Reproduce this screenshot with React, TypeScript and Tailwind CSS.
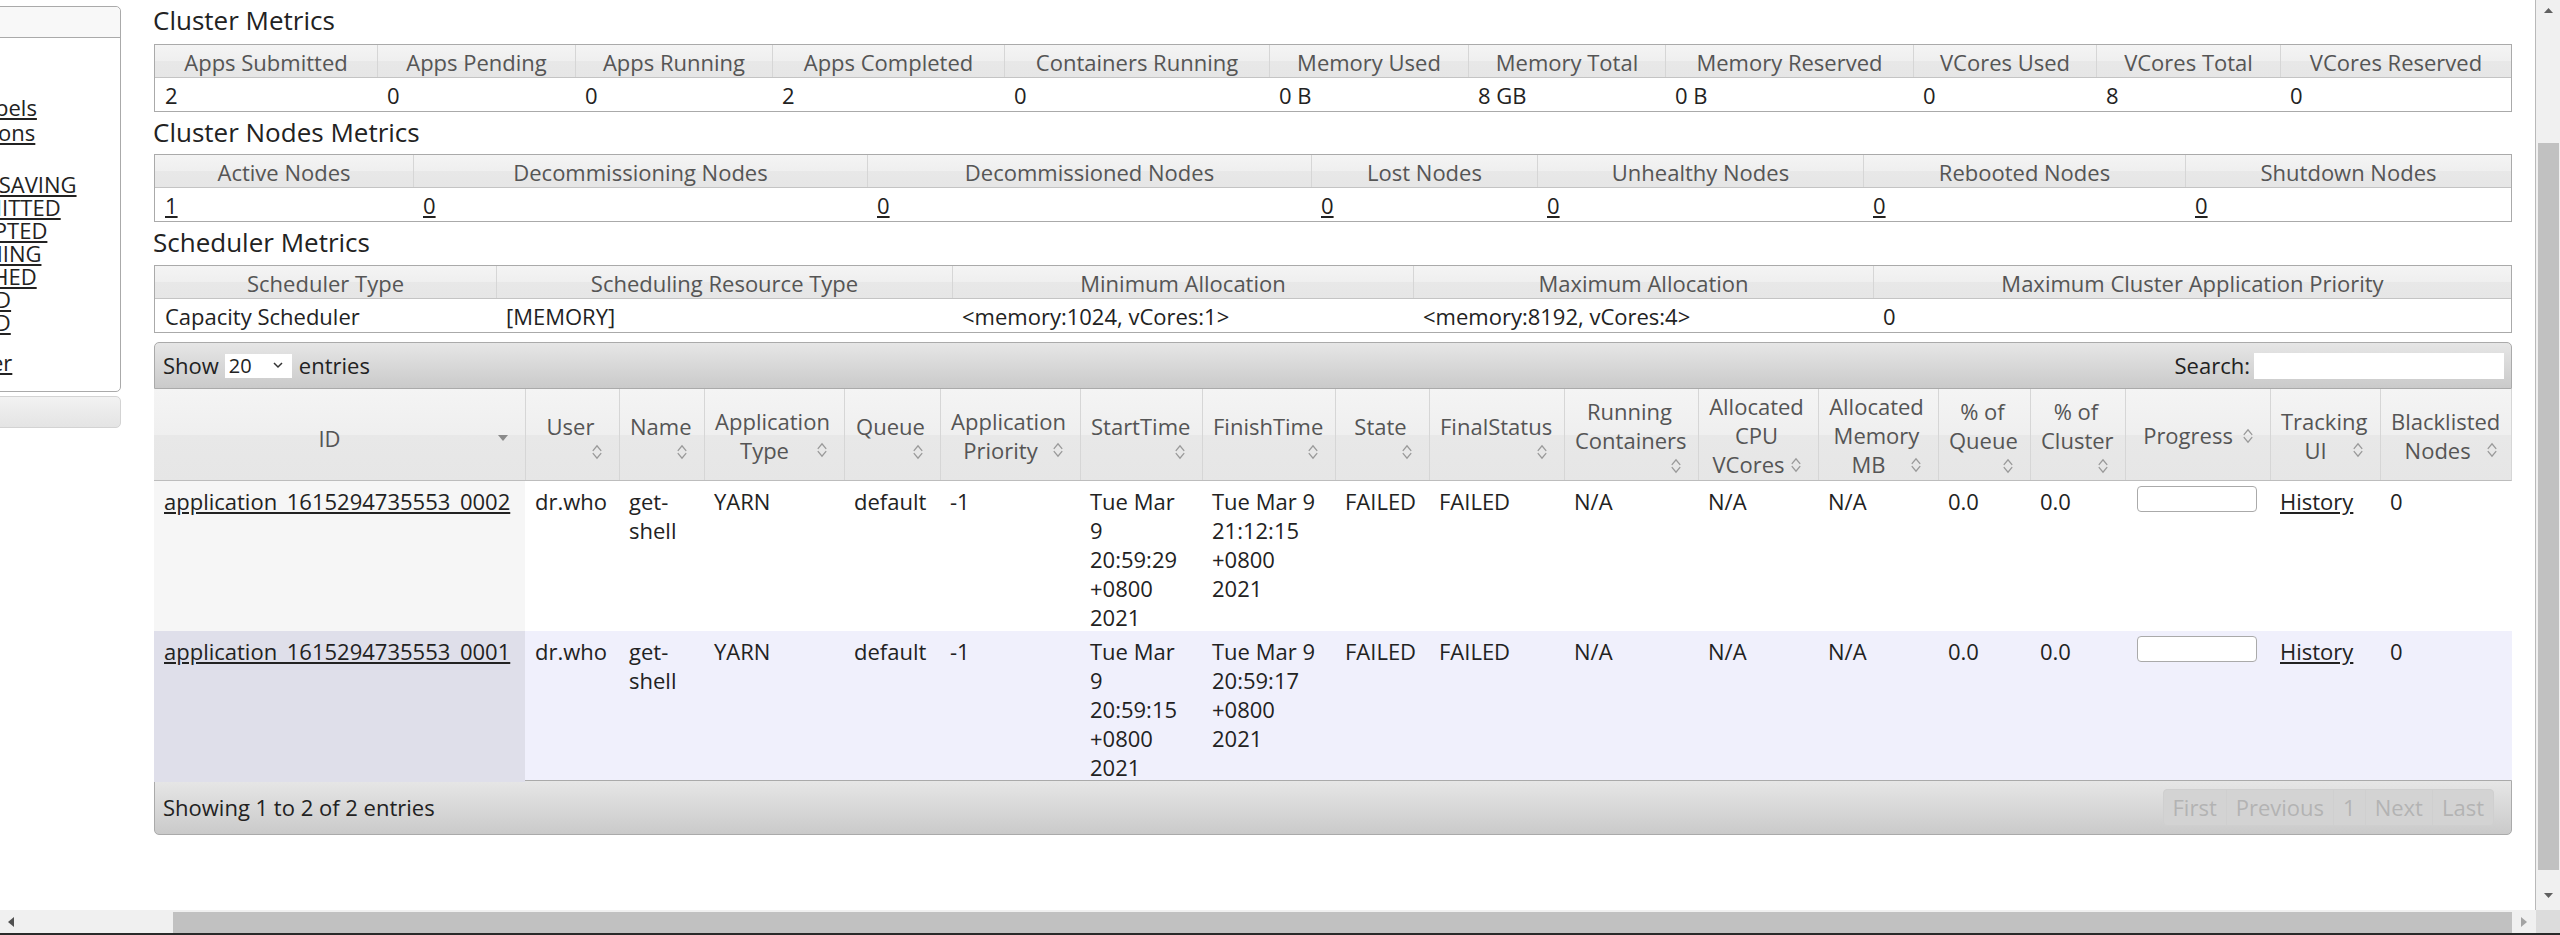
import React from "react";

const HDR =
  "bg-[linear-gradient(to_bottom,#f4f4f4_0%,#efefef_50%,#e8e8e8_50%,#e6e6e6_100%)]";
const BAR =
  "bg-[linear-gradient(to_bottom,#e6e6e6_0%,#d8d8d8_50%,#cacaca_100%)]";

function SortBoth() {
  return (
    <svg width="16" height="16" viewBox="0 0 16 16" className="shrink-0">
      <path d="M3.8 6.8L8 1.8L12.2 6.8" fill="none" stroke="#999" strokeWidth="1.3" />
      <path d="M3.8 9.2L8 14.2L12.2 9.2" fill="none" stroke="#999" strokeWidth="1.3" />
    </svg>
  );
}

function SortDesc() {
  return (
    <svg width="16" height="16" viewBox="0 0 16 16" className="shrink-0">
      <path d="M3 5H13L8 11Z" fill="#8a8a8a" />
    </svg>
  );
}

function Sidebar() {
  const main = ["About", "Nodes", "Node Labels", "Applications"];
  const states = [
    "NEW",
    "NEW_SAVING",
    "SUBMITTED",
    "ACCEPTED",
    "RUNNING",
    "FINISHED",
    "FAILED",
    "KILLED",
  ];
  return (
    <aside className="w-[121px] shrink-0 overflow-hidden pt-[6px]">
      <div className="-ml-[130px] w-[251px]">
        <div className="h-[386px] border border-[#aaa] rounded-[5px] bg-white">
          <div className="h-[31px] border-b border-[#aaa] rounded-t-[5px] bg-[#f8f8f8] pl-[30px] leading-[30px]">
            Cluster
          </div>
          <div className="pl-[39px] pt-[7px] whitespace-nowrap">
            <ul className="leading-[25px]">
              {main.map((m) => (
                <li key={m}>
                  <a className="underline">{m}</a>
                </li>
              ))}
            </ul>
            <ul className="pl-[30px] mt-[5px] leading-[23px]">
              {states.map((s) => (
                <li key={s}>
                  <a className="underline">{s}</a>
                </li>
              ))}
            </ul>
            <div className="mt-[16px] leading-[25px]">
              <a className="underline">Scheduler</a>
            </div>
          </div>
        </div>
        <div className="mt-[4px] h-[32px] border border-[#d3d3d3] rounded-[5px] bg-linear-to-b from-[#f2f2f2] to-[#e4e4e4] pl-[30px] leading-[30px] text-[#555]">
          Tools
        </div>
      </div>
    </aside>
  );
}

function MetricsTable({
  cols,
  heads,
  vals,
  link,
}: {
  cols: string;
  heads: string[];
  vals: string[];
  link?: boolean;
}) {
  return (
    <div className="border border-[#aaa]">
      <div className={`grid ${cols} h-[33px] border-b border-[#c4c4c4] ${HDR} text-[#555]`}>
        {heads.map((h, i) => (
          <div
            key={h}
            className={`flex items-center justify-center pt-[2px] whitespace-nowrap ${
              i ? "border-l border-[#d6d6d6]" : ""
            }`}
          >
            {h}
          </div>
        ))}
      </div>
      <div className={`grid ${cols} h-[33px]`}>
        {vals.map((v, i) => (
          <div key={i} className="flex items-center pl-[10px] pt-[2px] whitespace-nowrap">
            {link ? <a className="underline">{v}</a> : v}
          </div>
        ))}
      </div>
    </div>
  );
}

type Col = { lines: string[]; icon: "inline" | "below" | "desc" };

const appCols: Col[] = [
  { lines: ["ID"], icon: "desc" },
  { lines: ["User"], icon: "below" },
  { lines: ["Name"], icon: "below" },
  { lines: ["Application", "Type"], icon: "inline" },
  { lines: ["Queue"], icon: "below" },
  { lines: ["Application", "Priority"], icon: "inline" },
  { lines: ["StartTime"], icon: "below" },
  { lines: ["FinishTime"], icon: "below" },
  { lines: ["State"], icon: "below" },
  { lines: ["FinalStatus"], icon: "below" },
  { lines: ["Running", "Containers"], icon: "below" },
  { lines: ["Allocated", "CPU", "VCores"], icon: "inline" },
  { lines: ["Allocated", "Memory", "MB"], icon: "inline" },
  { lines: ["% of", "Queue"], icon: "below" },
  { lines: ["% of", "Cluster"], icon: "below" },
  { lines: ["Progress"], icon: "inline" },
  { lines: ["Tracking", "UI"], icon: "inline" },
  { lines: ["Blacklisted", "Nodes"], icon: "inline" },
];

const APP_GRID =
  "grid-cols-[371px_94px_85px_140px_96px_140px_122px_133px_94px_135px_134px_120px_120px_92px_95px_145px_110px_1fr]";

const apps = [
  {
    id: "application_1615294735553_0002",
    start: ["Tue Mar", "9", "20:59:29", "+0800", "2021"],
    finish: ["Tue Mar 9", "21:12:15", "+0800", "2021"],
  },
  {
    id: "application_1615294735553_0001",
    start: ["Tue Mar", "9", "20:59:15", "+0800", "2021"],
    finish: ["Tue Mar 9", "20:59:17", "+0800", "2021"],
  },
];

function HeadCell({ c, first }: { c: Col; first: boolean }) {
  return (
    <div
      className={`flex flex-col justify-center pt-[2px] pl-[10px] pr-[14px] whitespace-nowrap ${
        first ? "" : "border-l border-[#d6d6d6]"
      }`}
    >
      {c.lines.map((l, j) => {
        const last = j === c.lines.length - 1;
        if (last && c.icon !== "below") {
          return (
            <div key={j} className={`flex items-center ${c.icon === "desc" ? "mt-[5px]" : ""}`}>
              <span className="flex-1 text-center">{l}</span>
              {c.icon === "desc" ? <SortDesc /> : <SortBoth />}
            </div>
          );
        }
        return (
          <div key={j} className="text-center">
            {l}
          </div>
        );
      })}
      {c.icon === "below" && (
        <div className="mt-[3px] flex justify-end">
          <SortBoth />
        </div>
      )}
    </div>
  );
}

function Lines({ items }: { items: string[] }) {
  return (
    <>
      {items.map((t, i) => (
        <div key={i}>{t}</div>
      ))}
    </>
  );
}

function AppsTable() {
  return (
    <div className="mt-[9px]">
      <div className={`h-[47px] border border-[#aaa] rounded-t-[5px] ${BAR} flex items-center justify-between pl-[8px] pr-[7px]`}>
        <div className="flex items-center">
          <span>Show</span>
          <div className="ml-[6px] mr-[7px] w-[67px] h-[24px] bg-white flex items-center justify-between pl-[4px] pr-[9px] text-[20px]">
            <span>20</span>
            <svg width="10" height="7" viewBox="0 0 10 7">
              <path d="M1 1L5 5L9 1" fill="none" stroke="#333" strokeWidth="1.5" />
            </svg>
          </div>
          <span>entries</span>
        </div>
        <div className="flex items-center">
          <span>Search:</span>
          <div className="ml-[4px] w-[250px] h-[26px] bg-white" />
        </div>
      </div>

      <div className={`grid ${APP_GRID} h-[92px] border-b border-[#bdbdbd] border-r border-r-[#d6d6d6] ${HDR} text-[#555]`}>
        {appCols.map((c, i) => (
          <HeadCell key={i} c={c} first={i === 0} />
        ))}
      </div>

      {apps.map((a, r) => (
        <div
          key={a.id}
          className={`grid ${APP_GRID} ${r === 0 ? "h-[150px] bg-white" : "h-[149px] bg-[#f0f0fc]"} text-[#222]`}
        >
          <div className={`pl-[10px] pt-[6px] whitespace-nowrap ${r === 0 ? "bg-[#f6f6f6]" : "bg-[#dfdfea]"}`}>
            <a className="underline">{a.id}</a>
          </div>
          <div className="pl-[10px] pt-[6px]">dr.who</div>
          <div className="pl-[10px] pt-[6px]">
            <Lines items={["get-", "shell"]} />
          </div>
          <div className="pl-[10px] pt-[6px]">YARN</div>
          <div className="pl-[10px] pt-[6px]">default</div>
          <div className="pl-[10px] pt-[6px]">-1</div>
          <div className="pl-[10px] pt-[6px] whitespace-nowrap">
            <Lines items={a.start} />
          </div>
          <div className="pl-[10px] pt-[6px] whitespace-nowrap">
            <Lines items={a.finish} />
          </div>
          <div className="pl-[10px] pt-[6px]">FAILED</div>
          <div className="pl-[10px] pt-[6px]">FAILED</div>
          <div className="pl-[10px] pt-[6px]">N/A</div>
          <div className="pl-[10px] pt-[6px]">N/A</div>
          <div className="pl-[10px] pt-[6px]">N/A</div>
          <div className="pl-[10px] pt-[6px]">0.0</div>
          <div className="pl-[10px] pt-[6px]">0.0</div>
          <div className="pl-[12px] pt-[5px]">
            <div className="w-[120px] h-[26px] border border-[#aaa] rounded-[4px] bg-white" />
          </div>
          <div className="pl-[10px] pt-[6px]">
            <a className="underline">History</a>
          </div>
          <div className="pl-[10px] pt-[6px]">0</div>
        </div>
      ))}

      <div className={`h-[55px] border border-[#aaa] rounded-b-[5px] ${BAR} flex items-center justify-between pl-[8px] pr-[17px]`}>
        <span>Showing 1 to 2 of 2 entries</span>
        <div className="flex h-[37px] text-[#b3b3b3] rounded-[4px] border border-[#cfcfcf] bg-[#d3d3d3]">
          {["First", "Previous", "1", "Next", "Last"].map((p, i) => (
            <div
              key={p}
              className={`flex items-center px-[9px] ${i ? "border-l border-[#cfcfcf]" : ""}`}
            >
              {p}
            </div>
          ))}
        </div>
      </div>
    </div>
  );
}

function VScroll() {
  return (
    <div className="w-[25px] shrink-0 h-full bg-[#f0f0f0] border-l border-[#b9b9b9] flex flex-col">
      <div className="h-[20px] flex items-center justify-center">
        <svg width="9" height="5" viewBox="0 0 9 5">
          <path d="M0 5L4.5 0L9 5Z" fill="#606060" />
        </svg>
      </div>
      <div className="mt-[123px] ml-[2px] w-[21px] h-[727px] bg-[#c1c1c1]" />
      <div className="mt-[20px] h-[10px] flex items-center justify-center">
        <svg width="9" height="5" viewBox="0 0 9 5">
          <path d="M0 0L4.5 5L9 0Z" fill="#606060" />
        </svg>
      </div>
    </div>
  );
}

function HScroll() {
  return (
    <div className="h-[25px] flex bg-[#f0f0f0] border-b-2 border-[#2a2a2a]">
      <div className="w-[173px] flex items-center pl-[8px]">
        <svg width="6" height="10" viewBox="0 0 6 10">
          <path d="M6 0L0 5L6 10Z" fill="#505050" />
        </svg>
      </div>
      <div className="w-[2339px] h-[21px] mt-[2px] bg-[#c1c1c1]" />
      <div className="w-[24px] flex items-center justify-center">
        <svg width="6" height="10" viewBox="0 0 6 10">
          <path d="M0 0L6 5L0 10Z" fill="#a3a3a3" />
        </svg>
      </div>
      <div className="flex-1 bg-[#dcdcdc]" />
    </div>
  );
}

export default function App() {
  return (
    <div className="w-[2560px] h-[935px] overflow-hidden bg-white flex flex-col font-['Open_Sans',sans-serif] text-[22px] leading-[29px] text-[#222]">
      <div className="flex h-[910px]">
        <Sidebar />
        <main className="ml-[33px] w-[2358px] shrink-0">
          <h3 className="h-[44px] pt-[4px] text-[26px] leading-[32px] -ml-[1px]">Cluster Metrics</h3>
          <MetricsTable
            cols="grid-cols-[222px_198px_197px_232px_265px_199px_197px_248px_183px_184px_1fr]"
            heads={[
              "Apps Submitted",
              "Apps Pending",
              "Apps Running",
              "Apps Completed",
              "Containers Running",
              "Memory Used",
              "Memory Total",
              "Memory Reserved",
              "VCores Used",
              "VCores Total",
              "VCores Reserved",
            ]}
            vals={["2", "0", "0", "2", "0", "0 B", "8 GB", "0 B", "0", "8", "0"]}
          />
          <h3 className="h-[42px] pt-[4px] text-[26px] leading-[32px] -ml-[1px]">Cluster Nodes Metrics</h3>
          <MetricsTable
            cols="grid-cols-[258px_454px_444px_226px_326px_322px_1fr]"
            heads={[
              "Active Nodes",
              "Decommissioning Nodes",
              "Decommissioned Nodes",
              "Lost Nodes",
              "Unhealthy Nodes",
              "Rebooted Nodes",
              "Shutdown Nodes",
            ]}
            vals={["1", "0", "0", "0", "0", "0", "0"]}
            link
          />
          <h3 className="h-[43px] pt-[4px] text-[26px] leading-[32px] -ml-[1px]">Scheduler Metrics</h3>
          <MetricsTable
            cols="grid-cols-[341px_456px_461px_460px_1fr]"
            heads={[
              "Scheduler Type",
              "Scheduling Resource Type",
              "Minimum Allocation",
              "Maximum Allocation",
              "Maximum Cluster Application Priority",
            ]}
            vals={[
              "Capacity Scheduler",
              "[MEMORY]",
              "<memory:1024, vCores:1>",
              "<memory:8192, vCores:4>",
              "0",
            ]}
          />
          <AppsTable />
        </main>
        <div className="flex-1" />
        <VScroll />
      </div>
      <HScroll />
    </div>
  );
}
